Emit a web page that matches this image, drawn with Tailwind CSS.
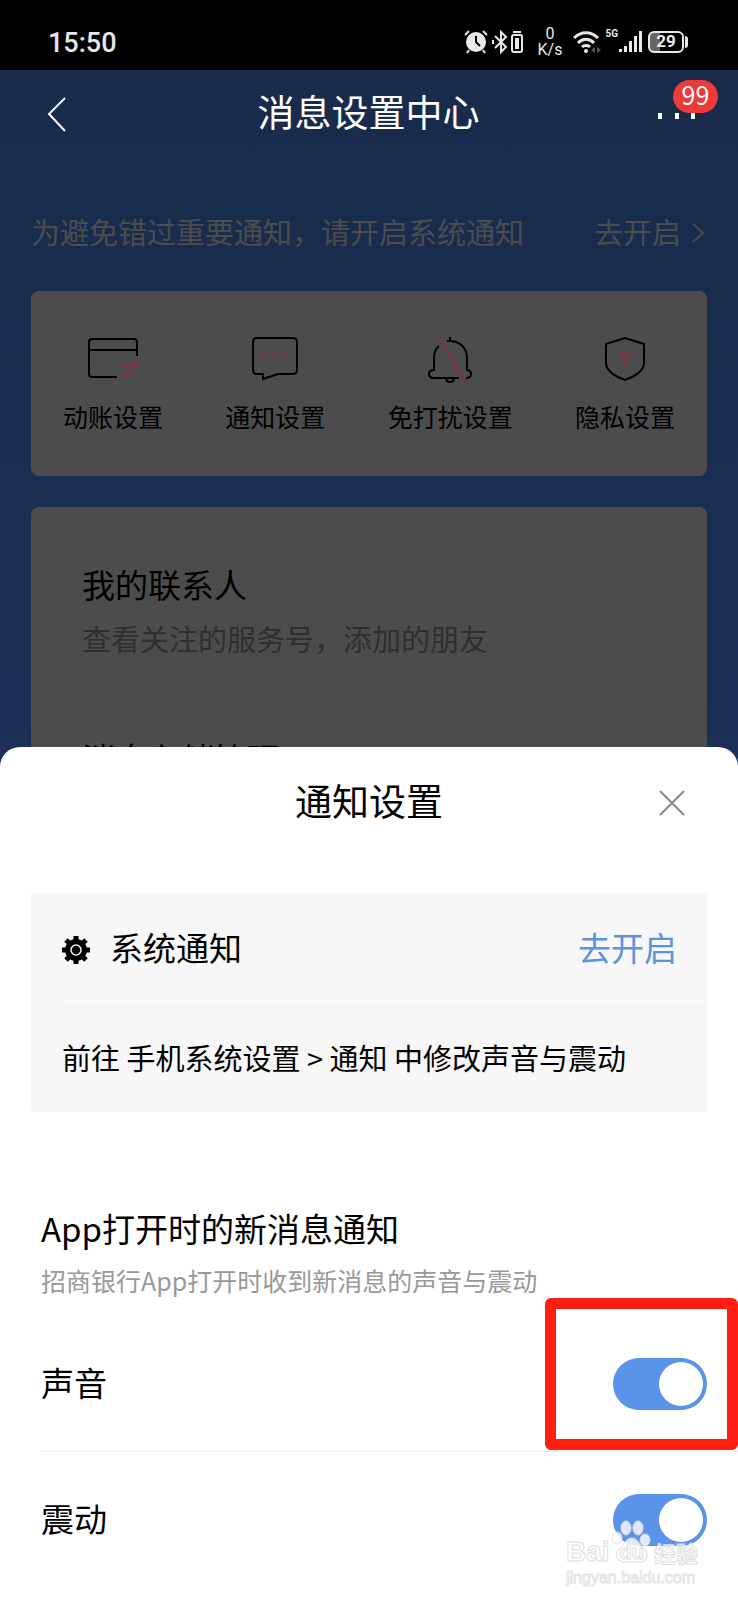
<!DOCTYPE html>
<html lang="zh-CN">
<head>
    <meta charset="UTF-8">
    <meta name="viewport" content="width=device-width, initial-scale=1.0">
    <title>消息设置中心</title>
    <script src="https://cdn.jsdelivr.net/npm/@tailwindcss/browser@4"></script>
</head>
<body class="min-h-screen bg-white text-black font-['Noto_Sans_CJK_SC',sans-serif]">
    <!-- Status bar -->
    <div class="flex items-center justify-between h-[70px] pt-[14px] pl-12 pr-[50px] bg-black text-[#e8e8e8] font-[Roboto,sans-serif]">
        <span class="pt-px text-[27px] leading-8 font-medium">15:50</span>
        <div class="flex items-center">
            <svg class="w-6 h-6" viewBox="0 0 24 24" fill="none">
                <circle cx="12" cy="12" r="10" fill="#e8e8e8"/>
                <path d="M1 5l4-4M23 5l-4-4M5 20l-2 3M19 20l2 3" stroke="#e8e8e8" stroke-width="2"/>
                <path d="M12 6v6l4 4" stroke="#000" stroke-width="2"/>
            </svg>
            <svg class="w-8 h-6 ml-1" viewBox="0 0 32 24" fill="none" stroke="#e8e8e8" stroke-width="2">
                <path d="M3 6l11 11-5 5V2l5 5L3 18M1 10v4"/>
                <rect x="20" y="5" width="10" height="17" rx="2"/>
                <path d="M21 2h8"/>
                <path d="M23 8h4v11h-4z" fill="#e8e8e8" stroke="none"/>
            </svg>
            <div class="flex flex-col items-center ml-[14px] text-[16px] leading-4">
                <span>0</span>
                <span>K/s</span>
            </div>
            <svg class="w-7 h-6 ml-[11px]" viewBox="0 0 28 24" fill="none" stroke="#e8e8e8" stroke-width="3">
                <path d="M1 8c7-7 17-7 24 0M5 13c5-5 11-5 16 0M9 17c2-2 6-2 8 0"/>
                <circle cx="13" cy="21" r="2" fill="#e8e8e8" stroke="none"/>
                <path d="M22 17l-4 3 4 3zM24 17l4 3-4 3z" fill="#555" stroke="none"/>
            </svg>
            <span class="self-start ml-1 text-[10px] leading-4 font-bold">5G</span>
            <svg class="w-6 h-6" viewBox="0 0 24 24" fill="#e8e8e8">
                <path d="M1 19h3v3H1zM6 16h3v6H6zM11 11h3v11h-3zM16 6h3v16h-3zM21 1h3v21h-3z"/>
            </svg>
            <div class="flex items-center ml-[6px]">
                <span class="flex items-center justify-center w-9 h-[22px] border-2 border-[#e8e8e8] rounded-md bg-linear-to-r from-[#666] from-30% to-black to-30% text-[17px] font-bold">29</span>
                <span class="w-[3px] h-3 ml-px rounded-r bg-[#e8e8e8]"></span>
            </div>
        </div>
    </div>

    <!-- Page behind the sheet -->
    <div class="bg-linear-to-b from-[#182b4a] to-[#1c3058]">
        <header class="flex items-center justify-between h-[86px] px-[43px] text-white">
            <button type="button" aria-label="返回" class="w-[36px] pt-[2px]">
                <svg class="w-7 h-9" viewBox="0 0 28 36" fill="none" stroke="#fff" stroke-width="2">
                    <path d="M22 2L6 18l16 17"/>
                </svg>
            </button>
            <h1 class="pb-1 text-[37px] leading-[52px]">消息设置中心</h1>
            <button type="button" aria-label="更多" class="relative flex items-center justify-between w-[37px] h-9">
                <span class="w-1 h-[6px] mt-[6px] bg-white"></span>
                <span class="w-1 h-[6px] mt-[6px] bg-white"></span>
                <span class="w-1 h-[6px] mt-[6px] bg-white"></span>
                <span class="absolute -top-[15px] left-[15px] flex items-center justify-center w-[45px] h-[33px] pb-1 rounded-full bg-[#ee3a39] text-[25px]">99</span>
            </button>
        </header>

        <div class="px-[31px]">
            <div class="flex items-center justify-between mt-[53px] mb-[38px] text-[29px] leading-[44px] text-[#4c4c4e]">
                <p>为避免错过重要通知，请开启系统通知</p>
                <a href="#" class="flex items-center gap-[6px]">去开启
                    <svg class="w-5 h-6" viewBox="0 0 20 24" fill="none" stroke="#4c4c4e" stroke-width="2">
                        <path d="M6 5l10 9-10 9"/>
                    </svg>
                </a>
            </div>

            <nav class="flex justify-between px-8 pt-[46px] pb-[42px] rounded-lg bg-[#4c4c4c] text-[25px] leading-9">
                <a href="#" class="flex flex-col items-center gap-[17px]">
                    <svg class="w-[50px] h-[44px]" viewBox="0 0 50 44" fill="none" stroke="#000" stroke-width="2">
                        <path d="M49 19V5q0-3-3-3H4Q1 2 1 5v32q0 3 3 3h25M1 13h48"/>
                        <path d="M36 29h12l-5-4M48 35H36M41 40l-5-5" stroke="#86303f"/>
                    </svg>
                    动账设置
                </a>
                <a href="#" class="flex flex-col items-center gap-[17px]">
                    <svg class="w-[46px] h-[44px]" viewBox="0 0 46 44" fill="none" stroke="#000" stroke-width="2">
                        <path d="M5 1h36q4 0 4 4v28q0 4-4 4H26l-15 5v-5H5q-4 0-4-4V5q0-4 4-4z"/>
                        <g fill="#86303f" stroke="none">
                            <circle cx="12" cy="18" r="2"/>
                            <circle cx="23" cy="18" r="2"/>
                            <circle cx="34" cy="18" r="2"/>
                        </g>
                    </svg>
                    通知设置
                </a>
                <a href="#" class="flex flex-col items-center gap-[17px]">
                    <svg class="w-[44px] h-[46px] -mb-[2px]" viewBox="0 0 44 46" fill="none" stroke="#000" stroke-width="2">
                        <path d="M19 4c12-1 20 6 20 17v12q4 0 4 4t-5 4M11 9C7 12 6 16 6 21v12q-5 0-5 4t5 4h25M22 0v4M18 41q0 4 4 4t4-4"/>
                        <path d="M12 0l25 45" stroke="#86303f"/>
                    </svg>
                    免打扰设置
                </a>
                <a href="#" class="flex flex-col items-center gap-[17px]">
                    <svg class="w-[40px] h-[44px]" viewBox="0 0 40 44" fill="none" stroke="#000" stroke-width="2">
                        <path d="M20 1L39 7v19c0 8-10 14-19 17C11 40 1 34 1 26V7z"/>
                        <path d="M20 23v7" stroke="#86303f"/>
                        <circle cx="20" cy="19" r="4" stroke="#86303f"/>
                    </svg>
                    隐私设置
                </a>
            </nav>

            <section class="mt-[31px] px-[51px] pt-[53px] rounded-t-lg bg-[#4c4c4c]">
                <h2 class="text-[33px] leading-[48px]">我的联系人</h2>
                <p class="mt-2 text-[29px] leading-[44px] text-[#2f2f2f]">查看关注的服务号，添加的朋友</p>
                <h2 class="mt-[74px] text-[33px] leading-[48px]">消息存储管理</h2>
            </section>
        </div>
    </div>

    <!-- Bottom sheet -->
    <main class="relative -mt-[35px] pb-3 rounded-t-[20px] bg-white">
        <div class="flex items-center justify-between h-[110px] px-[48px]">
            <span class="w-9"></span>
            <h2 class="pb-1 text-[37px] leading-[52px]">通知设置</h2>
            <button type="button" aria-label="关闭" class="w-9 h-9">
                <svg class="w-9 h-9" viewBox="0 0 36 36" fill="none" stroke="#888" stroke-width="2">
                    <path d="M6 7l24 24M30 7L6 31"/>
                </svg>
            </button>
        </div>

        <section class="mx-[31px] mt-9 pl-[31px] rounded bg-[#f7f7f7]">
            <div class="flex items-center h-[114px] pr-[30px] border-b border-[#f1f1f1] text-[33px] leading-[48px]">
                <svg class="w-7 h-7 mr-5" viewBox="0 0 28 28">
                    <g stroke="#000" stroke-width="5">
                        <path d="M14 0v28M0 14h28M4 4l20 20M24 4L4 24"/>
                    </g>
                    <circle cx="14" cy="14" r="11"/>
                    <circle cx="14" cy="14" r="5" fill="none" stroke="#f7f7f7" stroke-width="1.5"/>
                </svg>
                <h3 class="pb-[6px]">系统通知</h3>
                <a href="#" class="ml-auto pb-[6px] text-[#5b93de]">去开启</a>
            </div>
            <p class="pt-7 pb-[33px] text-[29px] leading-[44px]">前往 手机系统设置 &gt; 通知 中修改声音与震动</p>
        </section>

        <section class="mt-[92px]">
            <h3 class="px-[41px] text-[33px] leading-[48px]">App打开时的新消息通知</h3>
            <p class="mt-[10px] mb-[18px] px-[41px] text-[25px] leading-9 text-[#999]">招商银行App打开时收到新消息的声音与震动</p>

            <div class="relative pl-[41px]">
                <div class="flex items-center justify-between h-[136px] pr-[31px] border-b border-[#f0f0f0]">
                    <label for="sound" class="pb-1 text-[33px] leading-[48px]">声音</label>
                    <input type="checkbox" id="sound" checked class="appearance-none w-[94px] h-[52px] rounded-full bg-[#ccc] checked:bg-[#5a93ea] before:block before:size-11 before:m-1 checked:before:ml-[46px] before:rounded-full before:bg-white">
                </div>
                <!-- Highlight around the sound switch -->
                <div class="absolute -top-[18px] bottom-[2px] right-0 w-[193px] border-[11px] border-[#ff1e10] rounded-md pointer-events-none"></div>
            </div>
            <div class="flex items-center justify-between h-[136px] pl-[41px] pr-[31px]">
                <label for="vibrate" class="pb-1 text-[33px] leading-[48px]">震动</label>
                <input type="checkbox" id="vibrate" checked class="appearance-none w-[94px] h-[52px] rounded-full bg-[#ccc] checked:bg-[#5a93ea] before:block before:size-11 before:m-1 checked:before:ml-[46px] before:rounded-full before:bg-white">
            </div>
        </section>

        <!-- Watermark -->
        <div class="absolute right-10 bottom-3 w-[132px] text-white/70 font-bold pointer-events-none">
            <svg class="absolute left-[46px] -top-[17px] w-10 h-[44px]" viewBox="0 0 40 44" fill="#fff" fill-opacity=".8" stroke="#ddd" stroke-width="1">
                <ellipse cx="5" cy="19" rx="5" ry="6"/>
                <ellipse cx="14" cy="9" rx="5" ry="7"/>
                <ellipse cx="26" cy="9" rx="5" ry="7"/>
                <ellipse cx="33" cy="21" rx="5" ry="6"/>
                <path d="M20 19c-6 0-8 7-13 11-6 6-1 13 5 13h16c7 0 10-7 4-13-5-4-6-11-12-11z"/>
            </svg>
            <div class="relative flex items-center justify-between text-[28px] leading-8 [-webkit-text-stroke:1px_#dedede]">
                <span class="font-['Liberation_Sans',sans-serif]">Bai</span>
                <span class="text-[20px] font-['Liberation_Sans',sans-serif]">du</span>
                <span class="text-[22px]">经验</span>
            </div>
            <div class="text-[16px] leading-5 font-normal font-['Liberation_Sans',sans-serif] [-webkit-text-stroke:1px_#e4e4e4]">jingyan.baidu.com</div>
        </div>
    </main>
</body>
</html>
